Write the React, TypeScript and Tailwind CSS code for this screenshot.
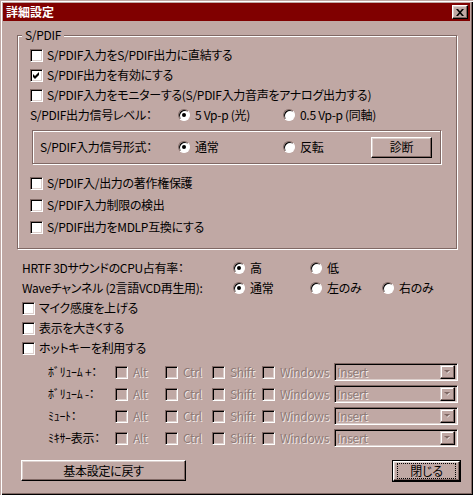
import React from 'react';

const Check = ({ checked = false, disabled = false }: { checked?: boolean; disabled?: boolean }) => (
  <span
    className={`inline-flex w-[13px] h-[13px] shrink-0 items-center justify-center border border-t-[#806864] border-l-[#806864] border-r-white border-b-white shadow-[inset_1px_1px_0_#000,inset_-1px_-1px_0_#dccfcc] ${
      disabled ? 'bg-[#c0a8a4]' : 'bg-white'
    }`}
  >
    {checked && (
      <svg width="7" height="7" viewBox="0 0 7 7">
        <path d="M0 2L2 4L6 0V3L2 7L0 5Z" fill="#000" />
      </svg>
    )}
  </span>
);

const Radio = ({ on = false }: { on?: boolean }) => (
  <span className="inline-flex w-[12px] h-[12px] shrink-0 items-center justify-center rounded-full bg-white border border-t-[#806864] border-l-[#806864] border-r-white border-b-white shadow-[inset_1px_1px_0_#000]">
    {on && <span className="w-[4px] h-[4px] rounded-full bg-black" />}
  </span>
);

const CheckRow = ({ label, checked }: { label: string; checked?: boolean }) => (
  <div className="flex h-[20px] items-center gap-[4px]">
    <Check checked={checked} />
    <span>{label}</span>
  </div>
);

const RadioItem = ({ label, on, w }: { label: string; on?: boolean; w: string }) => (
  <div className={`flex items-center gap-[5px] ${w}`}>
    <Radio on={on} />
    <span>{label}</span>
  </div>
);

const Dim = ({ children }: { children: React.ReactNode }) => (
  <span className="text-[#8e7a76] [text-shadow:1px_1px_0_#f2eae8]">{children}</span>
);

const Combo = () => (
  <div className="flex w-[124px] h-[18px] items-center border border-t-[#806864] border-l-[#806864] border-r-white border-b-white shadow-[inset_1px_1px_0_#000,inset_-1px_-1px_0_#dccfcc] bg-[#c0a8a4] pl-[2px] pr-[2px]">
    <span className="flex-1 leading-[14px]">
      <Dim>Insert</Dim>
    </span>
    <span className="flex w-[15px] h-[14px] items-center justify-center border border-t-[#dccfcc] border-l-[#dccfcc] border-r-black border-b-black shadow-[inset_-1px_-1px_0_#806864,inset_1px_1px_0_#fff]">
      <svg width="8" height="5" viewBox="0 0 8 5">
        <path d="M1 1h5L3.5 3.5Z" fill="#fff" />
        <path d="M0 0h6L3 3Z" fill="#806864" />
      </svg>
    </span>
  </div>
);

const HotkeyRow = ({ label }: { label: string }) => (
  <div className="flex h-[22px] items-center">
    <span className="w-[67px]">{label}</span>
    {[
      ['Alt', 'w-[50px]'],
      ['Ctrl', 'w-[47px]'],
      ['Shift', 'w-[50px]'],
      ['Windows', 'w-[72px]'],
    ].map(([k, w]) => (
      <div key={k} className={`flex items-center gap-[5px] ${w}`}>
        <Check disabled />
        <Dim>{k}</Dim>
      </div>
    ))}
    <Combo />
  </div>
);

const Button = ({ children, className = '' }: { children: React.ReactNode; className?: string }) => (
  <button
    className={`flex items-center justify-center border border-t-white border-l-white border-r-black border-b-black shadow-[inset_-1px_-1px_0_#806864,inset_1px_1px_0_#dccfcc] bg-[#c0a8a4] ${className}`}
  >
    {children}
  </button>
);

export default function App() {
  return (
    <div className="w-[473px] h-[495px] bg-[#c0a8a4] text-black text-[12px] leading-[14px] tracking-[-0.3px] font-['Noto_Sans_CJK_JP',sans-serif] [font-feature-settings:'palt'] shadow-[inset_1px_1px_0_#c0a8a4,inset_2px_2px_0_#fff,inset_-1px_-1px_0_#000,inset_-2px_-2px_0_#806864] pt-[3px] overflow-hidden">
      {/* title bar */}
      <div className="mx-[3px] h-[18px] bg-[#800000] flex items-center justify-between pl-[3px] pr-[2px]">
        <span className="text-white font-bold tracking-normal">詳細設定</span>
        <span className="flex w-[16px] h-[14px] items-center justify-center border border-t-white border-l-white border-r-black border-b-black shadow-[inset_-1px_-1px_0_#806864,inset_1px_1px_0_#dccfcc] bg-[#c0a8a4]">
          <svg width="8" height="7" viewBox="0 0 8 7">
            <path d="M0 0h2l2 2.2L6 0h2L5 3.5L8 7H6L4 4.8L2 7H0l3-3.5Z" fill="#000" />
          </svg>
        </span>
      </div>

      {/* S/PDIF group */}
      <fieldset className="ml-[17px] mt-[7px] w-[440px] border border-[#806864] shadow-[inset_1px_1px_0_#fff,1px_1px_0_#fff]">
        <legend className="ml-[4px] px-[3px] bg-[#c0a8a4]">S/PDIF</legend>
        <div className="pl-[12px] pt-[3px] pb-[10px]">
          <CheckRow label="S/PDIF入力をS/PDIF出力に直結する" />
          <CheckRow label="S/PDIF出力を有効にする" checked />
          <CheckRow label="S/PDIF入力をモニターする(S/PDIF入力音声をアナログ出力する)" />
          <div className="flex h-[20px] items-center">
            <span className="w-[148px]">S/PDIF出力信号レベル：</span>
            <RadioItem label="5 Vp-p (光)" on w="w-[105px]" />
            <RadioItem label="0.5 Vp-p (同軸)" w="w-[120px]" />
          </div>
          <div className="ml-[2px] mt-[5px] w-[409px] h-[34px] flex items-center pl-[7px] border border-[#806864] shadow-[inset_1px_1px_0_#fff,1px_1px_0_#fff]">
            <span className="w-[138px]">S/PDIF入力信号形式：</span>
            <RadioItem label="通常" on w="w-[105px]" />
            <RadioItem label="反転" w="w-[88px]" />
            <Button className="w-[61px] h-[21px]">診断</Button>
          </div>
          <div className="mt-[8px]">
            <div className="h-[22px] flex items-center gap-[4px]">
              <Check />
              <span>S/PDIF入/出力の著作権保護</span>
            </div>
            <div className="h-[22px] flex items-center gap-[4px]">
              <Check />
              <span>S/PDIF入力制限の検出</span>
            </div>
            <div className="h-[22px] flex items-center gap-[4px]">
              <Check />
              <span>S/PDIF出力をMDLP互換にする</span>
            </div>
          </div>
        </div>
      </fieldset>

      {/* general options */}
      <div className="pl-[22px] mt-[9px]">
        <div className="flex h-[20px] items-center">
          <span className="w-[211px]">HRTF 3DサウンドのCPU占有率：</span>
          <RadioItem label="高" on w="w-[77px]" />
          <RadioItem label="低" w="w-[72px]" />
        </div>
        <div className="flex h-[20px] items-center">
          <span className="w-[211px]">Waveチャンネル (2言語VCD再生用):</span>
          <RadioItem label="通常" on w="w-[77px]" />
          <RadioItem label="左のみ" w="w-[72px]" />
          <RadioItem label="右のみ" w="w-[72px]" />
        </div>
        <CheckRow label="マイク感度を上げる" />
        <CheckRow label="表示を大きくする" />
        <CheckRow label="ホットキーを利用する" />
      </div>

      {/* hotkeys */}
      <div className="pl-[48px] mt-[3px]">
        <HotkeyRow label="ﾎﾞﾘｭｰﾑ +：" />
        <HotkeyRow label="ﾎﾞﾘｭｰﾑ -：" />
        <HotkeyRow label="ﾐｭｰﾄ：" />
        <HotkeyRow label="ﾐｷｻｰ表示：" />
      </div>

      {/* bottom buttons */}
      <div className="flex justify-between items-start pl-[21px] pr-[12px] mt-[11px]">
        <Button className="w-[165px] h-[21px]">基本設定に戻す</Button>
        <div className="w-[69px] h-[22px] border border-black">
          <Button className="w-full h-full">
            <span className="outline outline-1 outline-dotted outline-black w-[57px] h-[14px] leading-[14px] flex items-center justify-center">閉じる</span>
          </Button>
        </div>
      </div>
    </div>
  );
}
